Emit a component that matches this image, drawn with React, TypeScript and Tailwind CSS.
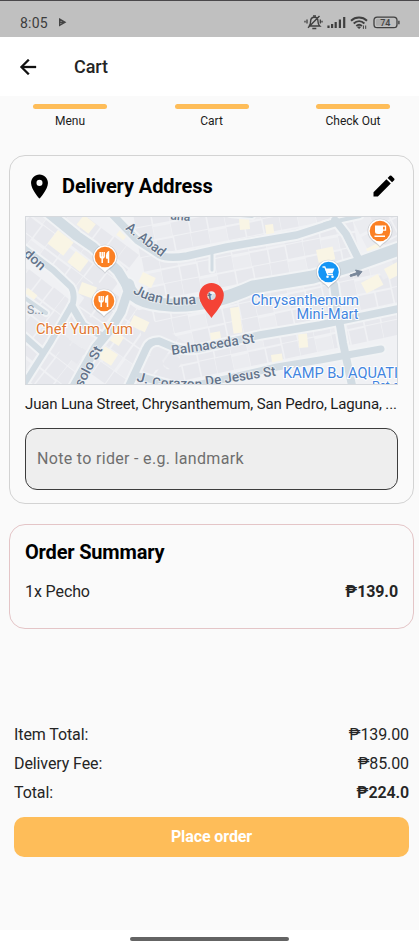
import React from "react";

const steps = ["Menu", "Cart", "Check Out"];

function StatusBar() {
  return (
    <div className="flex h-[37px] items-center border-t border-[#4a484b] bg-[#c0c0c0] pl-5 pr-[18px] pt-[7px] text-[#3c3c3c]">
      <span className="text-[14px] leading-4 tracking-[0.2px]">8:05</span>
      <svg className="ml-[10px]" width="9" height="9" viewBox="0 0 9 9" fill="none" stroke="#444" strokeWidth="1.4">
        <path d="M1.7 1.2 7 4.2 1.7 7.2Z M2 4.2h4" />
      </svg>
      <svg className="ml-auto" width="97" height="18" viewBox="304 13.500 97 18" fill="none" stroke="#3f3f3f">
        <path d="M309 25.500h10.800c-1.500-1.300-1.800-2.400-1.800-4.500 0-2.800-1.500-4.300-3.700-4.300s-3.700 1.500-3.700 4.300c0 2.100-.2 3.200-1.600 4.500M319.500 15.500 308 27.300" strokeWidth="1.4" />
        <path d="M312.300 28h4M307 19v4M305 20.200v1.800M320.300 19v4M322 20.200v1.800M313 15.500h3" strokeWidth="1.3" />
        <path d="M328.500 25v2.500M332.100 23.400v4.100M335.700 21.400v6.100M339.900 19v8.500M344.200 16.500v11" strokeWidth="2.2" />
        <path d="M351 20.200c4.500-4.300 11.500-4.300 16 0M353.700 23c3.200-3 7.600-3 10.700 0M356.300 25.500c1.800-1.600 3.900-1.600 5.600 0" strokeWidth="1.9" />
        <path d="m357.700 26.500 1.400 1.600 1.200-1.600z" fill="#3f3f3f" />
        <path d="M363.4 25v3.400M365.700 25v3.400" strokeWidth="1" />
        <rect x="374" y="16.600" width="23" height="10.600" rx="3.200" strokeWidth="1.300" />
        <rect x="376" y="18.500" width="14" height="6.800" rx="1.200" fill="#aeaeae" stroke="none" />
        <path d="M398.900 20.200v3.500" strokeWidth="1.400" />
        <text x="385.300" y="25.300" textAnchor="middle" fontSize="9" fontWeight="500" fill="#444" stroke="none">74</text>
      </svg>
    </div>
  );
}

const roads: [string, number][] = [
  ["M40 206 77 236 93 247 118 271 129 289", 10],
  ["M110 212 137 240 160 255Q168 259 187 256L227 247 297 235 337 222", 7.5],
  ["M128 285Q131 303 170 305T253 287L313 277 360 263 402 248", 13],
  ["M325 224 337 221 360 216", 4],
  ["M335 220 346 234 358 258", 7.5],
  ["M20 245 53 270 71 287Q75 293 73 303L50 343 24 384", 6],
  ["M22 296 46 313", 4],
  ["M24 336 42 352", 6],
  ["M127 294 121 312 110 330 96 347 72 390", 9],
  ["M72 306 83 325 102 336", 7],
  ["M127 390 146 349Q149 341 159 341L173 347Q188 352 207 347L260 335 320 325 402 308", 7.5],
  ["M138 376 182 388 230 378 277 367 320 360 353 354 381 349", 7],
  ["M334 285 338 314 343 343 353 390", 8],
  ["M212 254V270", 3],
  ["M230 214 252 216", 4],
];

const blocks: { at: string; rows: number; cols: number; w: number; h: number }[] = [
  { at: "translate(6 250) rotate(38)", rows: 6, cols: 9, w: 15, h: 18 },
  { at: "translate(50 188) rotate(37)", rows: 4, cols: 7, w: 16, h: 17 },
  { at: "translate(132 214) rotate(-11)", rows: 6, cols: 12, w: 18, h: 15 },
  { at: "translate(135 310) rotate(-12)", rows: 5, cols: 16, w: 17, h: 16 },
  { at: "translate(345 205) rotate(-27)", rows: 5, cols: 5, w: 17, h: 17 },
  { at: "translate(50 345) rotate(-55)", rows: 7, cols: 5, w: 16, h: 17 },
];

const cream: [number, number, number, number, number][] = [
  [58, 230, 20, 17, 38], [84, 215, 15, 12, 38], [76, 251, 16, 14, 38], [123, 226, 9, 11, 38],
  [82, 282, 16, 12, 20], [103, 345, 18, 13, 33], [114, 331, 12, 10, 33], [134, 315, 17, 11, 25],
  [28, 288, 12, 10, 38], [239, 218, 10, 12, -5], [265, 225, 8, 13, -8], [316, 250, 17, 13, -12],
  [230, 308, 9, 26, -8], [298, 334, 9, 14, -5], [271, 355, 11, 10, -8], [361, 283, 19, 12, -28],
  [384, 269, 15, 12, -28], [143, 272, 14, 11, 25], [366, 249, 14, 7, -28], [210, 333, 10, 8, -10],
];

function Poi({ x, y, color, kind }: { x: number; y: number; color: string; kind: "food" | "cart" | "cup" }) {
  return (
    <g transform={`translate(${x} ${y})`}>
      <path d="M0 16.800c-2-4-12.500-7-12.500-16.500a12.500 12.500 0 0 1 25 0c0 9.500-10.500 12.500-12.500 16.500Z" fill="#a9afb8" opacity=".5" />
      <path d="M0 15.500c-2-4-11.700-7-11.700-15.500a11.700 11.700 0 0 1 23.400 0c0 8.500-9.700 11.500-11.700 15.500Z" fill="#fff" />
      <circle r="10.300" fill={color} />
      {kind === "food" && (
        <g stroke="#fff" fill="none" strokeWidth="1.500">
          <path d="M-4.800-5v4q0 1.800 2 1.800T-.800-1v-4M-2.800-5V6" />
          <path d="M3.500 6V-5C1.800-4 1.500-1 1.800 1h1.700" fill="#fff" />
        </g>
      )}
      {kind === "cup" && (
        <g>
          <path d="M-5-5.500H3V.500Q3 3-.500 3h-1.500Q-5 3-5 .500Z M-5.500 4.500H5v1.500H-5.500Z" fill="#fff" />
          <path d="M2.500-4.800H5.500V-.800H2.500" fill="none" stroke="#fff" strokeWidth="1.300" />
        </g>
      )}
      {kind === "cart" && (
        <g>
          <path d="M-6-5h2.300l3 7.500H4.500" fill="none" stroke="#fff" strokeWidth="1.300" />
          <path d="M-3.500-3.500H6L4 1.200H-1.800Z" fill="#fff" />
          <circle cx="-1" cy="4.700" r="1.300" fill="#fff" />
          <circle cx="4" cy="4.700" r="1.300" fill="#fff" />
        </g>
      )}
    </g>
  );
}

function Street({ x, y, r, w, size = 13.5, children }: { x: number; y: number; r: number; w: number; size?: number; children: string }) {
  return (
    <text transform={`translate(${x} ${y}) rotate(${r})`} fontSize={size} fontWeight="500" fill="#64748a" stroke="#eef1f5" strokeWidth="1.500" paintOrder="stroke" textLength={w} lengthAdjust="spacingAndGlyphs">
      {children}
    </text>
  );
}

function DeliveryMap() {
  return (
    <svg className="block h-[169px] w-[373px]" viewBox="25 216 373 169">
      <rect x="25" y="216" width="373" height="169" fill="#f0f1f4" />
      {blocks.map((b, k) => (
        <g key={k} transform={b.at}>
          {Array.from({ length: b.rows * b.cols }, (_, i) => {
            const c = i % b.cols;
            const r = Math.floor(i / b.cols);
            const n = (i * 7 + k * 3) % 5;
            return (
              <rect key={i} x={c * b.w + (n % 2)} y={r * b.h + (n % 3)} width={b.w - 0.6 - (n % 2)} height={b.h - 1 - (n % 3)} fill={n === 2 ? "#ebecf0" : "#e7e8ed"} />
            );
          })}
        </g>
      ))}
      {cream.map(([x, y, w, h, a], i) => (
        <rect key={i} x={x} y={y} width={w} height={h} transform={`rotate(${a} ${x} ${y})`} fill="#f9f5e5" />
      ))}
      {roads.map(([d, w], i) => (
        <path key={i} d={d} fill="none" stroke="#f1f3f5" strokeWidth={w + 4} strokeLinecap="round" strokeLinejoin="round" />
      ))}
      {roads.map(([d, w], i) => (
        <path key={i} d={d} fill="none" stroke="#d2dce3" strokeWidth={w} strokeLinecap="round" strokeLinejoin="round" />
      ))}
      <path d="M350 275 357 272.500 355.500 270 362 271.500 358 276.500 357.300 274.500 350.500 276.500Z" fill="#78879a" stroke="#78879a" />
      <Street x={125} y={229} r={38} w={46}>A. Abad</Street>
      <Street x={23} y={255} r={42} w={24}>don</Street>
      <Street x={170} y={219.500} r={4} w={20} size={12}>una</Street>
      <path id="juan-luna" d="M132.500 293Q150 303 170 304.500T220 300" fill="none" />
      <text fontSize="14" fontWeight="500" fill="#64748a" stroke="#eef1f5" strokeWidth="1.500" paintOrder="stroke">
        <textPath href="#juan-luna" textLength="83">Juan Luna St</textPath>
      </text>
      <Street x={172} y={355} r={-8.500} w={84}>Balmaceda St</Street>
      <Street x={136} y={381} r={14} w={12}>J.</Street>
      <Street x={152} y={387} r={2} w={50}>Corazon</Street>
      <Street x={206} y={386} r={-8.500} w={71}>De Jesus St</Street>
      <Street x={82} y={388} r={-62} w={44}>solo St</Street>
      <text x="27" y="314" fontSize="12.500" fill="#87929f" textLength="17" lengthAdjust="spacingAndGlyphs">S...</text>
      <g fontSize="14.500" stroke="#fff" strokeWidth="2" paintOrder="stroke">
        <text x="36" y="333.500" fill="#df7833" textLength="97" lengthAdjust="spacingAndGlyphs">Chef Yum Yum</text>
        <g fill="#4285e0">
          <text x="251" y="304.500" textLength="108" lengthAdjust="spacingAndGlyphs">Chrysanthemum</text>
          <text x="296.500" y="318.500" textLength="62" lengthAdjust="spacingAndGlyphs">Mini-Mart</text>
          <text x="283" y="377.500" textLength="115" lengthAdjust="spacingAndGlyphs">KAMP BJ AQUATI</text>
          <text x="372" y="390" fontSize="12">Pet an</text>
        </g>
      </g>
      <Poi x={105} y={257} color="#fb8024" kind="food" />
      <Poi x={104} y={301} color="#fb8024" kind="food" />
      <Poi x={380} y={231} color="#fb8024" kind="cup" />
      <Poi x={328.5} y={272} color="#1595f5" kind="cart" />
      <path fillRule="evenodd" d="M211.500 318c-3-4.500-12.300-13.500-12.300-22.700a12.300 12.300 0 0 1 24.600 0c0 9.200-9.300 18.200-12.300 22.700ZM211.500 291.300a4.300 4.300 0 1 0 0 8.600 4.300 4.300 0 0 0 0-8.600Z" fill="#f44336" />
      <path d="M25 216.500H398M25.500 216V385M397.500 216V385M25 384.500H398" stroke="#d6d9dd" fill="none" />
    </svg>
  );
}

function Row({ label, value, bold }: { label: string; value: string; bold?: boolean }) {
  return (
    <div className="flex h-[28.7px] items-center justify-between">
      <span>{label}</span>
      <span className={bold ? "font-semibold" : ""}>{value}</span>
    </div>
  );
}

export default function App() {
  return (
    <div className="flex h-[946px] w-[419px] flex-col overflow-hidden bg-[#fafafa] font-[Roboto,sans-serif] text-[#252525]">
      <StatusBar />
      <header className="flex h-[59px] items-center bg-white pl-4">
        <svg width="24" height="24" viewBox="0 0 24 24" fill="#111" stroke="#111" strokeWidth="0.300">
          <path d="M20 11H7.830l5.590-5.590L12 4l-8 8 8 8 1.410-1.410L7.830 13H20v-2z" />
        </svg>
        <h1 className="ml-[34px] text-[18px] font-medium leading-6 tracking-[-0.1px]">Cart</h1>
      </header>
      <nav className="flex gap-[67.5px] pl-[33px] pt-2">
        {steps.map((s) => (
          <div key={s} className="flex w-[74px] shrink-0 flex-col items-center">
            <div className="h-[5px] w-full rounded-full bg-[#febd59]" />
            <span className="mt-1 text-[12px] leading-4 text-[#1c1c1c]">{s}</span>
          </div>
        ))}
      </nav>
      <section className="ml-[9px] mt-[26px] h-[349px] w-[405px] shrink-0 rounded-2xl border border-[#d3d3d3] px-[15px]">
        <div className="flex h-[60px] items-center text-black">
          <svg width="29" height="29" viewBox="0 0 24 24">
            <path d="M12 2C8.130 2 5 5.130 5 9c0 5.250 7 13 7 13s7-7.750 7-13c0-3.870-3.130-7-7-7zm0 9.500a2.500 2.500 0 0 1 0-5 2.500 2.500 0 0 1 0 5z" />
          </svg>
          <h2 className="ml-[8px] text-[20px] font-bold leading-6 tracking-[-0.1px]">Delivery Address</h2>
          <svg className="ml-auto" width="28" height="28" viewBox="0 0 24 24">
            <path d="M3 17.250V21h3.750L17.810 9.940l-3.750-3.750L3 17.250zM20.710 7.040a.996.996 0 0 0 0-1.410l-2.340-2.340a.996.996 0 0 0-1.410 0l-1.830 1.830 3.750 3.750 1.830-1.830z" />
          </svg>
        </div>
        <DeliveryMap />
        <p className="mt-[9px] whitespace-nowrap text-[15px] leading-5 tracking-[-0.13px] text-[#1c1c1c]">Juan Luna Street, Chrysanthemum, San Pedro, Laguna, ...</p>
        <div className="mt-[14px] flex h-[62px] w-[373px] items-center rounded-xl border border-[#3c3c3c] bg-[#eee] pl-[11px] text-[16px] tracking-[0.32px] text-[#6e6e6e]">
          Note to rider - e.g. landmark
        </div>
      </section>
      <section className="ml-[9px] mt-5 h-[105px] w-[405px] shrink-0 rounded-2xl border border-[#e4c5c7] px-[15px] pt-[15px]">
        <h2 className="text-[20px] font-bold leading-6 tracking-[-0.18px] text-black">Order Summary</h2>
        <div className="mt-4 flex items-center justify-between text-[16px] leading-6 tracking-[-0.1px]">
          <span>1x Pecho</span>
          <span className="font-bold">₱139.0</span>
        </div>
      </section>
      <section className="mt-[92px] pl-[14px] pr-[10px] text-[16px] tracking-[-0.1px]">
        <Row label="Item Total:" value="₱139.00" />
        <Row label="Delivery Fee:" value="₱85.00" />
        <Row label="Total:" value="₱224.0" bold />
        <button className="mt-[10px] block h-10 w-full rounded-[10px] bg-[#febd59] text-[16px] font-bold tracking-[-0.1px] text-white">Place order</button>
      </section>
      <footer className="mt-auto flex h-4 shrink-0 justify-center bg-white pt-[7px]">
        <div className="h-1 w-[159px] rounded-full bg-[#646464]" />
      </footer>
    </div>
  );
}
